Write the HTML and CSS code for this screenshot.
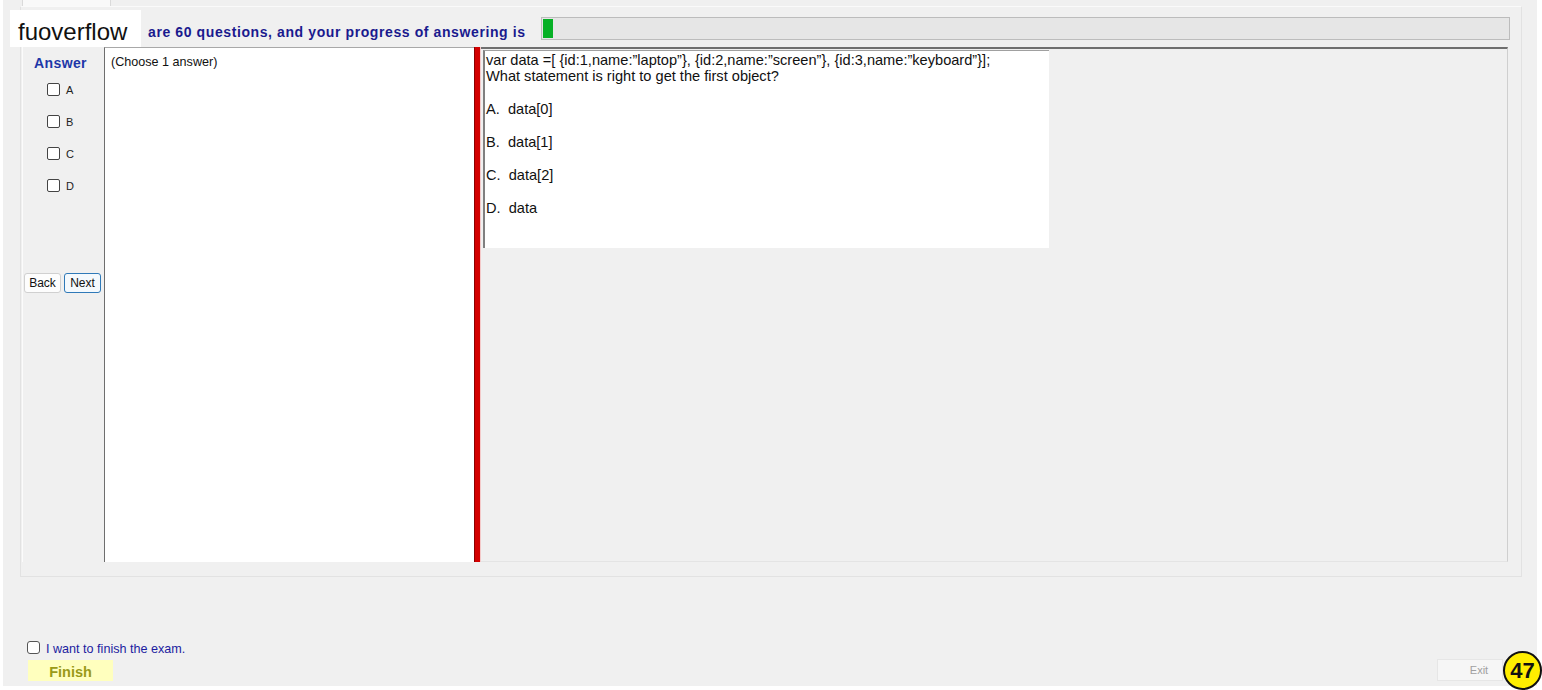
FILE: index.html
```html
<!DOCTYPE html>
<html>
<head>
<meta charset="utf-8">
<link rel="stylesheet" href="styles.css">
</head>
<body>
<div class="window">
  <div class="tabstrip"><div class="tab"></div></div>
  <div class="tabpage">
    <div class="header">
      <div class="header-text">are 60 questions, and your progress of answering is</div>
      <div class="progress"><div class="progress-fill" style="width:10px"></div></div>
    </div>
    <div class="main">
      <div class="answer-col">
        <div class="answer-title">Answer</div>
        <div class="choices">
          <label class="choice"><span class="box"></span><span>A</span></label>
          <label class="choice"><span class="box"></span><span>B</span></label>
          <label class="choice"><span class="box"></span><span>C</span></label>
          <label class="choice"><span class="box"></span><span>D</span></label>
        </div>
        <div class="nav">
          <button class="btn">Back</button>
          <button class="btn btn-focus">Next</button>
        </div>
      </div>
      <div class="left-panel">(Choose 1 answer)</div>
      <div class="splitter"></div>
      <div class="right-panel">
        <div class="question">
          <div class="q-stem">var data =[ {id:1,name:”laptop”}, {id:2,name:”screen”}, {id:3,name:”keyboard”}];<br>What statement is right to get the first object?</div>
          <div class="q-opt">A.&nbsp; data[0]</div>
          <div class="q-opt">B.&nbsp; data[1]</div>
          <div class="q-opt">C.&nbsp; data[2]</div>
          <div class="q-opt">D.&nbsp; data</div>
        </div>
      </div>
    </div>
  </div>
  <div class="bottom">
    <label class="finish-check"><span class="box"></span><span>I want to finish the exam.</span></label>
    <div class="bottom-row">
      <button class="finish">Finish</button>
      <button class="exit">Exit</button>
    </div>
  </div>
</div>
<div class="brand">fuoverflow</div>
<div class="badge">47</div>
</body>
</html>
```
FILE: styles.css
```css
* { box-sizing: border-box; }
html, body { margin: 0; padding: 0; }
body {
  width: 1542px;
  height: 690px;
  background: #ffffff;
  font-family: "Liberation Sans", Arial, sans-serif;
  position: relative;
  overflow: hidden;
}
.window {
  margin-left: 3px;
  width: 1534px;
  height: 686px;
  background: #f0f0f0;
  display: flex;
  flex-direction: column;
}
.tabstrip {
  height: 6px;
  display: flex;
  padding-left: 19px;
}
.tab {
  width: 89px;
  height: 6px;
  background: #f9f9f9;
  border-left: 1px solid #dadada;
  border-right: 1px solid #dadada;
}
.tabpage {
  margin-left: 17px;
  width: 1502px;
  height: 571px;
  border: 1px solid #e2e2e2;
  border-top-color: #fafafa;
  background: #f0f0f0;
  padding: 10px 13px 0 1px;
  display: flex;
  flex-direction: column;
}
.header {
  height: 23px;
  display: grid;
  grid-template-columns: 519px 1fr;
  margin-right: -2px;
}
.header-text {
  padding-left: 126px;
  font-weight: bold;
  font-size: 14px;
  letter-spacing: 0.6px;
  line-height: 23px;
  color: #1a1a8e;
  white-space: nowrap;
  padding-top: 4px;
}
.progress {
  height: 23px;
  background: #e6e6e6;
  border: 1px solid #bcbcbc;
  padding: 1px 0 1px 1px;
}
.progress-fill {
  height: 19px;
  background: #06b025;
}
.main {
  margin-top: 7px;
  height: 515px;
  display: grid;
  grid-template-columns: 82px 370px 7px 1fr;
}
.answer-col {
  display: flex;
  flex-direction: column;
  border-left: 1px solid #fbfbfb;
}
.answer-title {
  margin-top: 9px;
  padding-left: 11px;
  font-weight: bold;
  font-size: 14px;
  letter-spacing: 0.4px;
  color: #1e37a8;
  line-height: 14px;
}
.choices {
  margin-top: 13px;
  padding-left: 24px;
  display: flex;
  flex-direction: column;
  gap: 19px;
}
.choice {
  display: flex;
  align-items: center;
  height: 13px;
  font-size: 11px;
  color: #222;
  gap: 6px;
}
.box {
  width: 13px;
  height: 13px;
  border: 1px solid #444;
  border-radius: 2px;
  background: #fff;
  flex: none;
}
.nav {
  margin-top: 81px;
  padding-left: 1px;
  display: flex;
  gap: 3px;
}
.btn {
  width: 37px;
  height: 20px;
  padding: 0;
  font-family: "Liberation Sans", Arial, sans-serif;
  font-size: 12px;
  color: #111;
  background: #fdfdfd;
  border: 1px solid #d0d0d0;
  border-radius: 3px;
}
.btn-focus {
  border: 1px solid #2f79b8;
  background: #f4f9fd;
}
.left-panel {
  background: #ffffff;
  border-left: 1px solid #6e6e6e;
  border-top: 1px solid #a8a8a8;
  padding: 7px 0 0 6px;
  font-size: 12.6px;
  line-height: 14px;
  color: #111;
}
.splitter {
  background: #d30000;
  border-left: 1px solid #8c0000;
  border-right: 1px solid #f3c9c9;
}
.right-panel {
  background: #f0f0f0;
  border-top: 2px solid #6f6f6f;
  border-right: 1px solid #cfcfcf;
  border-bottom: 1px solid #e4e4e4;
  padding: 1px 0 0 2px;
}
.question {
  width: 566px;
  height: 198px;
  background: #ffffff;
  border-left: 2px solid #808080;
  border-top: 1px solid #a0a0a0;
  padding: 1px 0 0 1px;
  font-size: 14.6px;
  line-height: 16px;
  color: #111;
}
.q-stem {
  white-space: nowrap;
}
.q-opt {
  margin-top: 17px;
}
.bottom {
  flex: 1;
  display: flex;
  flex-direction: column;
  justify-content: flex-end;
  padding: 0 34px 5px 24px;
}
.finish-check {
  display: flex;
  align-items: center;
  gap: 6px;
  height: 14px;
  font-size: 12.6px;
  color: #1c1ca0;
}
.finish-check span:last-child {
  position: relative;
  top: 2px;
}
.finish-check .box {
  width: 13px;
  height: 13px;
  border-color: #555;
  border-radius: 3px;
}
.bottom-row {
  margin-top: 5px;
  display: flex;
  justify-content: space-between;
  align-items: flex-end;
}
.finish {
  margin-left: 1px;
  width: 85px;
  height: 21px;
  padding: 2px 0 0 0;
  background: #ffffbe;
  border: none;
  font-family: "Liberation Sans", Arial, sans-serif;
  font-weight: bold;
  font-size: 14.5px;
  color: #9a9a18;
}
.exit {
  width: 66px;
  height: 22px;
  padding: 0 0 0 18px;
  background: #f6f6f6;
  border: 1px solid #e6e6e6;
  font-family: "Liberation Sans", Arial, sans-serif;
  font-size: 11px;
  color: #a0a0a0;
}
.brand {
  position: absolute;
  left: 10px;
  top: 10px;
  width: 131px;
  height: 37px;
  background: #ffffff;
  padding-left: 8px;
  padding-top: 3px;
  font-size: 24px;
  line-height: 38px;
  color: #111;
}
.badge {
  position: absolute;
  right: 0;
  bottom: 0;
  width: 39px;
  height: 39px;
  border-radius: 50%;
  background: #ffee00;
  border: 2px solid #111;
  display: flex;
  align-items: center;
  justify-content: center;
  font-weight: bold;
  font-size: 22px;
  color: #111;
}
```
